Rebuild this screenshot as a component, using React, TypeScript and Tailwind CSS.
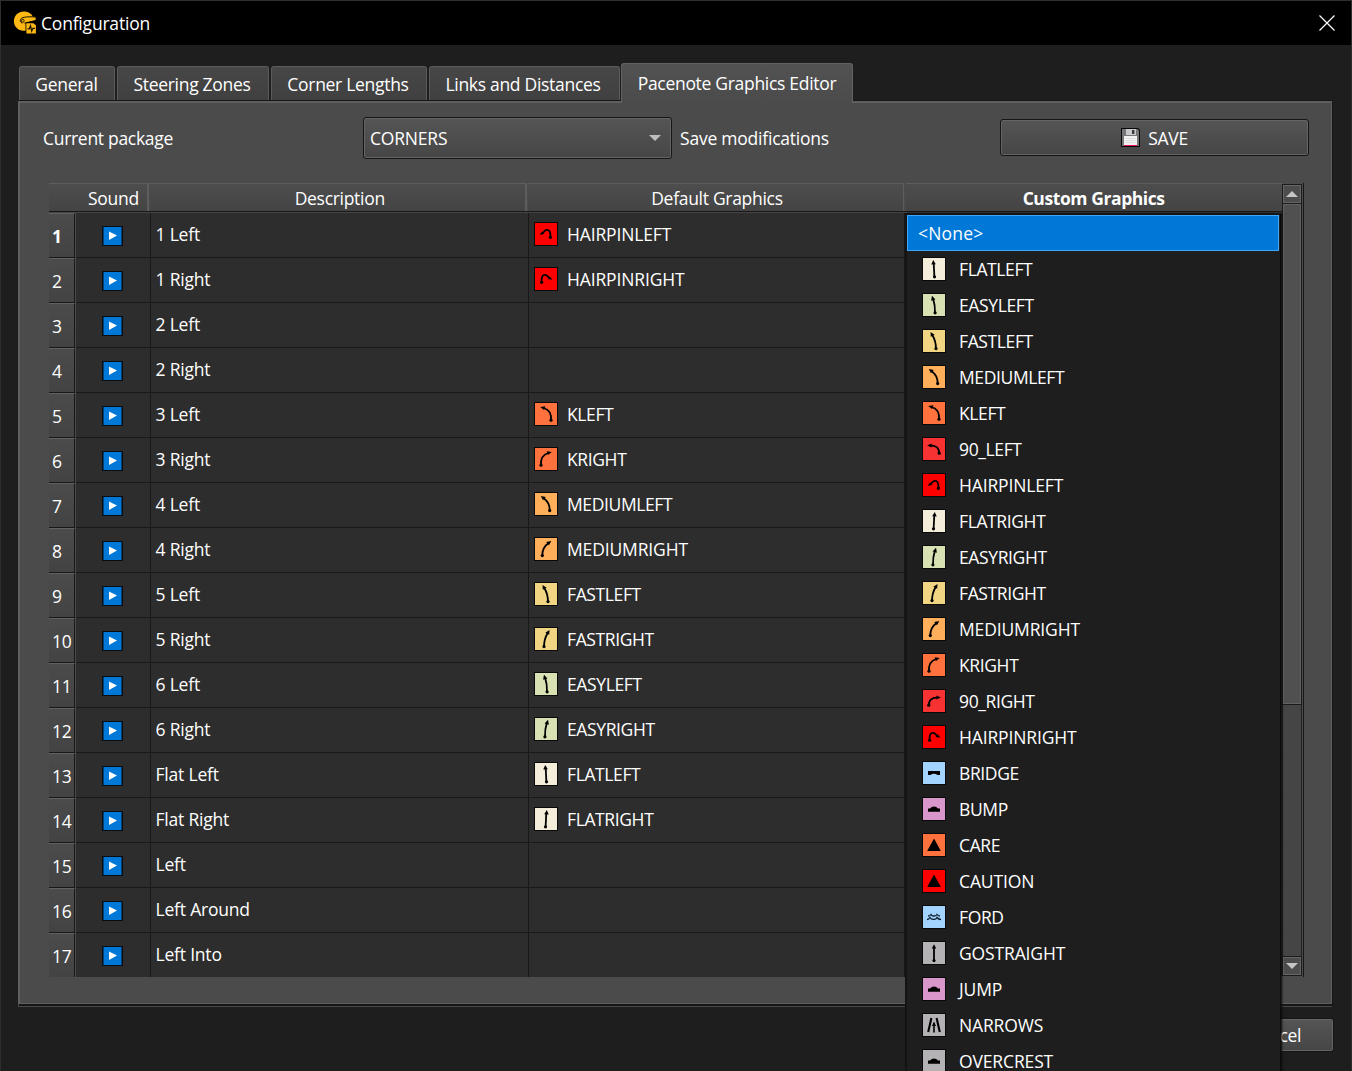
import React from "react";

type Glyph = { color: string; d?: string; kind?: "arrow" | "shape" | "wave" | "narrows"; head?: string; dot?: [number, number]; flip?: boolean };

const turns = {
  flat: { d: "M12.4 20 L11.7 6", head: "11.2,3 9.3,7.4 13.8,7.2", dot: [12.5, 19.8] as [number, number] },
  easy: { d: "M13 20 Q13.2 12 11.2 6", head: "10,2.8 9.1,7.8 13.4,6.6", dot: [13.1, 19.8] as [number, number] },
  fast: { d: "M14 20 C14 13.5 12.5 9.5 10.3 6", head: "8.5,3 8.8,7.8 12.7,5.7", dot: [14, 19.6] as [number, number] },
  medium: { d: "M15.7 19 C15.9 13 13.5 8.8 9.6 6.2", head: "6.8,4 9,8.3 11.8,5", dot: [15.7, 18.6] as [number, number] },
  k: { d: "M17 18.5 C17.6 11.5 14.8 7.4 9.5 6", head: "6.2,5 10,8.1 11.4,4.3", dot: [17, 18.2] as [number, number] },
  ninety: { d: "M17.2 16.4 C17.4 11 13.6 8.3 9 8.6", head: "5.2,8.6 9.6,10.5 9.5,6.6", dot: [17.2, 16.2] as [number, number] },
  hairpin: { d: "M16.4 15.4 C17 7 12.4 5.6 8.6 11.2", head: "5.6,12.8 10.4,12.1 8,9.4", dot: [16.4, 15.3] as [number, number] },
};

const glyphs: Record<string, Glyph> = {
  FLATLEFT: { color: "#f3edd9", ...turns.flat },
  EASYLEFT: { color: "#d8e1b1", ...turns.easy },
  FASTLEFT: { color: "#f1d583", ...turns.fast },
  MEDIUMLEFT: { color: "#ffae5a", ...turns.medium },
  KLEFT: { color: "#ff723d", ...turns.k },
  "90_LEFT": { color: "#f63232", ...turns.ninety },
  HAIRPINLEFT: { color: "#ff0000", ...turns.hairpin },
  FLATRIGHT: { color: "#f3edd9", ...turns.flat, flip: true },
  EASYRIGHT: { color: "#d8e1b1", ...turns.easy, flip: true },
  FASTRIGHT: { color: "#f1d583", ...turns.fast, flip: true },
  MEDIUMRIGHT: { color: "#ffae5a", ...turns.medium, flip: true },
  KRIGHT: { color: "#ff723d", ...turns.k, flip: true },
  "90_RIGHT": { color: "#f63232", ...turns.ninety, flip: true },
  HAIRPINRIGHT: { color: "#ff0000", ...turns.hairpin, flip: true },
  BRIDGE: { color: "#a3d3ff", kind: "shape", d: "M6 10H18V14H15.6Q12 11.6 8.4 14H6Z" },
  BUMP: { color: "#d896cb", kind: "shape", d: "M6 14.7V11.6H8Q9.5 9.4 12 9.4T16 11.6H18V14.7Z" },
  CARE: { color: "#ff723d", kind: "shape", d: "M12 5.5L18.8 18H5.2Z" },
  CAUTION: { color: "#ff0000", kind: "shape", d: "M12 5.5L18.8 18H5.2Z" },
  FORD: { color: "#a3d3ff", kind: "wave", d: "M6 11Q8 11 9 9.5Q10 11.2 12.2 11Q14 11 15 9.5Q16 11 18 11M5 14.5Q7 14.5 8 12.5Q9.5 14.7 11.8 14.4Q14 14.5 15 12.5Q16.5 14.5 19 14.5" },
  GOSTRAIGHT: { color: "#b4b2b5", d: "M12 20V6", head: "12,3.2 9.8,7.6 14.2,7.6", dot: [12, 19.6] },
  JUMP: { color: "#d896cb", kind: "shape", d: "M6 14.7V11.6H8Q9.5 9.4 12 9.4T16 11.6H18V14.7Z" },
  NARROWS: { color: "#b4b2b5", kind: "narrows" },
  OVERCREST: { color: "#b4b2b5", kind: "shape", d: "M6 14.7V11.6H8Q9.5 9.4 12 9.4T16 11.6H18V14.7Z" },
};

function NoteIcon({ name }: { name: string }) {
  const g = glyphs[name];
  return (
    <svg width="24" height="24" viewBox="0 0 24 24" className="shrink-0">
      <rect width="24" height="24" fill="#090909" />
      <rect x="1" y="1" width="22" height="22" fill={g.color} />
      <g transform={g.flip ? "translate(24 0) scale(-1 1)" : undefined}>
        {g.kind === "shape" && <path d={g.d} fill="#000" />}
        {g.kind === "wave" && <path d={g.d} fill="none" stroke="#0b1a26" strokeWidth="1.3" />}
        {g.kind === "narrows" && (
          <>
            <path d="M6.2 19L9.4 5M17.8 19L14.6 5" stroke="#000" strokeWidth="2.1" />
            <path d="M12 19.5V10" stroke="#000" strokeWidth="1.6" />
            <polygon points="12,8.4 10,13 14,13" />
          </>
        )}
        {!g.kind && (
          <>
            <path d={g.d} fill="none" stroke="#000" strokeWidth="1.8" />
            <polygon points={g.head} />
            <circle cx={g.dot![0]} cy={g.dot![1]} r="1.6" />
          </>
        )}
      </g>
    </svg>
  );
}

function NoteLabel({ name }: { name: string }) {
  const wide = /HAIRPIN|MEDIUMRIGHT|CAUTION|STRAIGHT|NARROWS|JUMP|OVERCREST/.test(name);
  return <span className={wide ? "tracking-[-0.14px]" : "tracking-[-0.38px]"}>{name}</span>;
}

const rows: [string, string?][] = [
  ["1 Left", "HAIRPINLEFT"],
  ["1 Right", "HAIRPINRIGHT"],
  ["2 Left"],
  ["2 Right"],
  ["3 Left", "KLEFT"],
  ["3 Right", "KRIGHT"],
  ["4 Left", "MEDIUMLEFT"],
  ["4 Right", "MEDIUMRIGHT"],
  ["5 Left", "FASTLEFT"],
  ["5 Right", "FASTRIGHT"],
  ["6 Left", "EASYLEFT"],
  ["6 Right", "EASYRIGHT"],
  ["Flat Left", "FLATLEFT"],
  ["Flat Right", "FLATRIGHT"],
  ["Left"],
  ["Left Around"],
  ["Left Into"],
];

const tabs = [
  { label: "General", box: "w-[96px] mr-[2px] pr-px" },
  { label: "Steering Zones", box: "w-[152px] mr-[2px] pr-[2px]" },
  { label: "Corner Lengths", box: "w-[156px] mr-[2px] pr-[2px]" },
  { label: "Links and Distances", box: "w-[191px] mr-px pr-[3px]" },
];

const raised = "rounded-[3px] border border-[#161616] bg-linear-to-b from-[#555555] to-[#464646] shadow-[inset_0_0_0_1px_#646464]";
const headCell = "h-full border-t border-[#5d5d5d] bg-linear-to-b from-[#4d4d4d] to-[#444444] flex items-center justify-center";

function PlayButton() {
  return (
    <svg width="21" height="20" viewBox="0 0 21 20">
      <rect width="21" height="20" fill="#080d12" />
      <rect x="1.5" y="1" width="18" height="18" fill="#0078d7" />
      <path d="M7 5.4L15 9.6L7 14Z" fill="#fff" />
    </svg>
  );
}

function Helmet() {
  return (
    <svg width="24" height="24" viewBox="0 0 24 24">
      <path d="M11 .5C5 .5 .9 4.8 .9 10.3c0 5 3.6 8.8 8.6 9.4h4V12H12L22.6 9.6V6L20 5.8C18.4 2.6 15 .5 11 .5Z" fill="#fdb813" />
      <path d="M23 6C16 5.6 11.5 5.8 9 7C6.6 8.4 6.8 11.4 9.4 12.2" fill="none" stroke="#120d00" strokeWidth="1" />
      <circle cx="9.8" cy="9.8" r="1.4" fill="none" stroke="#120d00" strokeWidth=".9" />
      <path d="M11.5 12.2L23 9.4V12H13V20" fill="none" stroke="#000" strokeWidth="1" />
      <path d="M13.4 12.3h7l2.5 2v8.2h-9.5Z" fill="#fdb813" />
      <path d="M14.5 17.8h1.8l1.2-3 1.2 5.2 1.2-2.6h2.1" fill="none" stroke="#221700" strokeWidth="1.3" />
    </svg>
  );
}

function Floppy() {
  return (
    <svg width="19" height="19" viewBox="0 0 19 19">
      <path d="M0 0H17L19 2V19H0Z" fill="#080808" />
      <path d="M1 1H16.5L18 2.6V18H1Z" fill="#77777a" />
      <rect x="5" y="1" width="10" height="6" fill="#c9c9cb" />
      <rect x="11" y="2" width="2.4" height="4" fill="#39393b" />
      <rect x="3" y="8" width="13" height="9" fill="#f1f1f1" />
      <path d="M4.5 10.5H14.5M4.5 12.5H14.5M4.5 14.5H14.5" stroke="#d9d9d9" strokeWidth=".8" />
      <rect x="3" y="17" width="13" height="1" fill="#f00a5a" />
    </svg>
  );
}

function ArrowButton({ down }: { down?: boolean }) {
  return (
    <div className="flex h-[20px] w-[20px] shrink-0 items-center justify-center border border-[#1b1b1b] bg-[#4c4c4c] shadow-[inset_0_0_0_1px_#656565]">
      <svg width="12" height="6" viewBox="0 0 12 6">
        <path d={down ? "M0 0H12L6 6Z" : "M0 6H12L6 0Z"} fill="#c4c4c4" />
      </svg>
    </div>
  );
}

export default function App() {
  return (
    <div className="relative flex h-[1071px] w-[1352px] flex-col overflow-hidden border-t border-r border-l border-[#2e2e2e] bg-[#1e1e1e] font-['Open_Sans','Noto_Sans',sans-serif] text-[17.5px] leading-6 tracking-[-0.3px] whitespace-nowrap text-white">
      <header className="flex h-[44px] shrink-0 items-center bg-black pr-[16px] pl-[12px]">
        <Helmet />
        <h1 className="ml-[4px] grow tracking-[-0.2px]">Configuration</h1>
        <svg width="16" height="16" viewBox="0 0 16 16" className="-mt-px">
          <path d="M.5 .5L15.5 15.5M15.5 .5L.5 15.5" stroke="#fff" strokeWidth="1.2" />
        </svg>
      </header>

      <nav className="flex h-[55px] shrink-0 items-end pl-[18px]">
        {tabs.map((t) => (
          <div key={t.label} className={`${t.box} flex h-[34px] items-center justify-center rounded-t-[3px] border border-b-0 border-[#5c5c5c] bg-linear-to-b from-[#474747] to-[#404040] pt-px`}>
            {t.label}
          </div>
        ))}
        <div className="relative z-10 -mb-[3px] flex h-[40px] w-[232px] items-start justify-center rounded-t-[3px] border border-b-0 border-[#626262] bg-linear-to-b from-[#525252] to-[#4b4b4b] pt-[7px]">
          Pacenote Graphics Editor
        </div>
      </nav>

      <main className="mt-px ml-[17px] h-[903px] w-[1314px] shrink-0 border-2 border-r border-b border-[#5f5f5f] bg-[#4b4b4b] shadow-[0_-1px_0_#161616,1px_1px_0_#161616,1px_2px_0_#161616,0_3px_0_#484848]">
        <div className="flex h-[80px] items-start pl-[23px]">
          <span className="mt-[23px] w-[320px]">Current package</span>
          <div className={`${raised} mt-[14px] flex h-[42px] w-[309px] items-center justify-between pr-[10px] pl-[6px] tracking-[-0.2px]`}>
            CORNERS
            <svg width="12" height="6" viewBox="0 0 12 6">
              <path d="M0 0H12L6 6Z" fill="#bdbdbd" />
            </svg>
          </div>
          <span className="mt-[23px] ml-[8px] w-[320px] tracking-[-0.22px]">Save modifications</span>
          <button className={`${raised} mt-[16px] flex h-[37px] w-[309px] items-center justify-center gap-[8px]`}>
            <Floppy />
            SAVE
          </button>
        </div>

        <div className="ml-[29px] flex h-[794px] w-[1255px]">
          <div className="flex w-[1233px] flex-col">
            <div className="flex h-[29px] shrink-0 border-b border-[#171717]">
              <div className={`${headCell} w-[27px]`} />
              <div className={`${headCell} w-[73px] border-r-2 pl-[4px]`}>Sound</div>
              <div className={`${headCell} ml-px w-[377px] border-r-2 pl-[5px]`}>Description</div>
              <div className={`${headCell} ml-px w-[377px] border-r pl-[3px]`}>Default Graphics</div>
              <div className={`${headCell} ml-[2px] w-[376px] pr-px font-bold tracking-[-0.42px]`}>Custom Graphics</div>
            </div>
            <div className="h-px shrink-0 bg-[#454545]" />
            <div className="h-[764px] overflow-hidden">
              {rows.map(([desc, def], i) => (
                <div key={desc} className="flex h-[45px]">
                  <div className={`flex w-[26px] items-center border-t border-r border-b border-t-[#626262] border-r-[#171717] border-b-[#171717] bg-linear-to-b from-[#4b4b4b] to-[#434343] pt-px pl-[3px] ${i === 0 ? "font-bold" : ""}`}>
                    {i + 1}
                  </div>
                  <div className="ml-px flex w-[75px] items-center justify-center border-r border-b border-[#191919] bg-[#2d2d2d] pt-px pr-[2px]">
                    <PlayButton />
                  </div>
                  <div className="flex w-[378px] items-center border-r border-b border-[#191919] bg-[#2d2d2d] pb-[2px] pl-[4.5px] tracking-[-0.2px]">{desc}</div>
                  <div className="flex w-[376px] items-center gap-[9px] border-r border-b border-[#191919] bg-[#2d2d2d] pb-[2px] pl-[5px]">
                    {def && (
                      <>
                        <NoteIcon name={def} />
                        <NoteLabel name={def} />
                      </>
                    )}
                  </div>
                  <div className="grow border-b border-[#191919] bg-[#2d2d2d]" />
                </div>
              ))}
            </div>
          </div>
          <div className="flex w-[22px] flex-col border-r border-[#171717] pt-px pb-px">
            <ArrowButton />
            <div className="-mt-px h-[502px] w-[20px] shrink-0 border border-[#1b1b1b] bg-[#505050] shadow-[inset_0_0_0_1px_#626262]" />
            <div className="w-[20px] grow border-x border-[#222222] bg-[#454545]" />
            <ArrowButton down />
          </div>
        </div>
      </main>

      <footer className="mt-[14px] flex justify-end pr-[17px]">
        <button className={`${raised} flex h-[34px] w-[110px] items-center justify-center pr-[8px]`}>Cancel</button>
      </footer>

      <div className="absolute top-[212px] left-[904px] w-[375px] border-t-2 border-l-2 border-[#141414] bg-[#1e1e1e] shadow-[2px_0_2px_#0a0a0a]">
        <div className="flex h-[36px] w-[372px] items-center border border-[#3fa6f8] bg-[#0078d7] pb-px pl-[10px] tracking-[0.2px]">&lt;None&gt;</div>
        {Object.keys(glyphs).map((name) => (
          <div key={name} className="flex h-[36px] items-center gap-[13px] pl-[15px]">
            <NoteIcon name={name} />
            <NoteLabel name={name} />
          </div>
        ))}
      </div>
    </div>
  );
}
